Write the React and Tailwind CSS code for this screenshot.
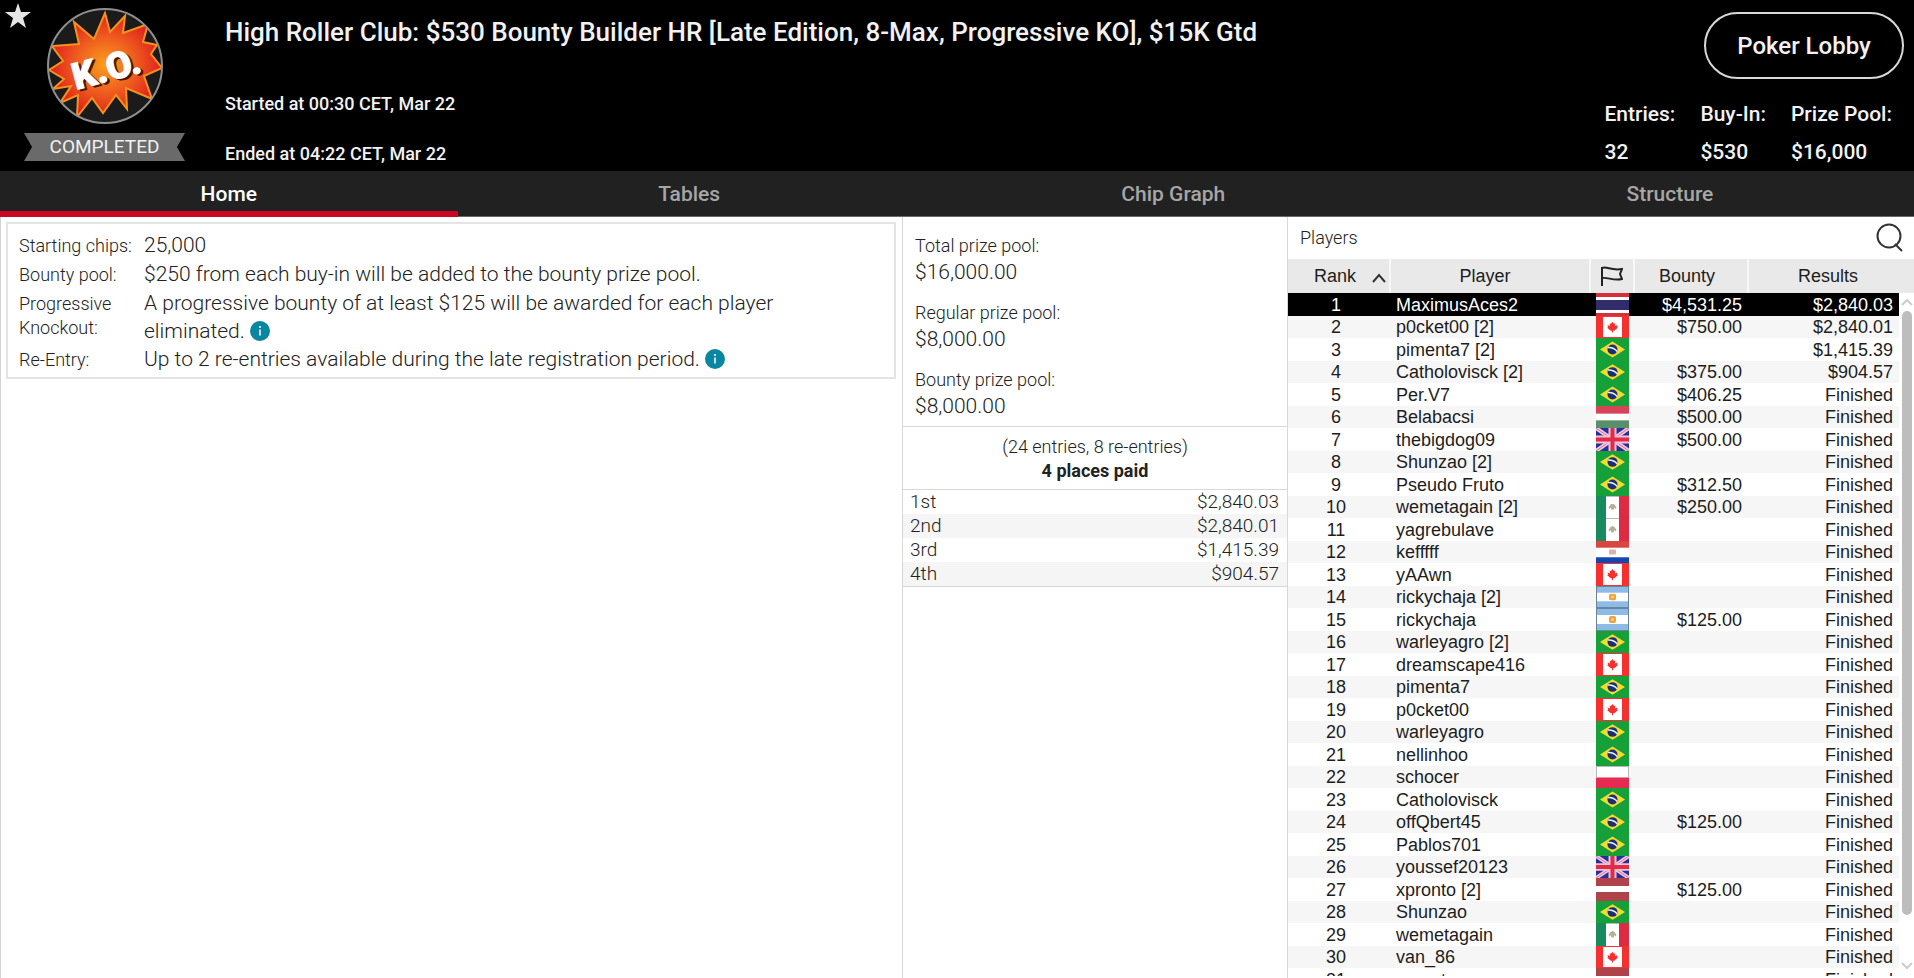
import React from "react";

const header = [
    { label: "Entries:", value: "32" },
    { label: "Buy-In:", value: "$530" },
    { label: "Prize Pool:", value: "$16,000" },
];

const tabs = ["Home", "Tables", "Chip Graph", "Structure"];

const pools = [
    { label: "Total prize pool:", value: "$16,000.00" },
    { label: "Regular prize pool:", value: "$8,000.00" },
    { label: "Bounty prize pool:", value: "$8,000.00" },
];

const payouts = [
    { place: "1st", prize: "$2,840.03" },
    { place: "2nd", prize: "$2,840.01" },
    { place: "3rd", prize: "$1,415.39" },
    { place: "4th", prize: "$904.57" },
];

const players = [
    { name: "MaximusAces2", flag: "th", bounty: "$4,531.25", result: "$2,840.03" },
    { name: "p0cket00 [2]", flag: "ca", bounty: "$750.00", result: "$2,840.01" },
    { name: "pimenta7 [2]", flag: "br", result: "$1,415.39" },
    { name: "Catholovisck [2]", flag: "br", bounty: "$375.00", result: "$904.57" },
    { name: "Per.V7", flag: "br", bounty: "$406.25" },
    { name: "Belabacsi", flag: "hu", bounty: "$500.00" },
    { name: "thebigdog09", flag: "gb", bounty: "$500.00" },
    { name: "Shunzao [2]", flag: "br" },
    { name: "Pseudo Fruto", flag: "br", bounty: "$312.50" },
    { name: "wemetagain [2]", flag: "mx", bounty: "$250.00" },
    { name: "yagrebulave", flag: "mx" },
    { name: "kefffff", flag: "py" },
    { name: "yAAwn", flag: "ca" },
    { name: "rickychaja [2]", flag: "ar" },
    { name: "rickychaja", flag: "ar", bounty: "$125.00" },
    { name: "warleyagro [2]", flag: "br" },
    { name: "dreamscape416", flag: "ca" },
    { name: "pimenta7", flag: "br" },
    { name: "p0cket00", flag: "ca" },
    { name: "warleyagro", flag: "br" },
    { name: "nellinhoo", flag: "br" },
    { name: "schocer", flag: "pl" },
    { name: "Catholovisck", flag: "br" },
    { name: "offQbert45", flag: "br", bounty: "$125.00" },
    { name: "Pablos701", flag: "br" },
    { name: "youssef20123", flag: "gb" },
    { name: "xpronto [2]", flag: "lv", bounty: "$125.00" },
    { name: "Shunzao", flag: "br" },
    { name: "wemetagain", flag: "mx" },
    { name: "van_86", flag: "ca" },
    { name: "xpronto", flag: "lv" },
];

const flags = {
    th: (
        <>
            <rect width="33" height="23" fill="#d6303c" />
            <rect y="4" width="33" height="16" fill="#fff" />
            <rect y="7" width="33" height="10" fill="#312c6b" />
        </>
    ),
    ca: (
        <>
            <rect width="33" height="23" fill="#f5302f" />
            <rect x="7" y="1" width="19" height="21" fill="#fff" />
            <path d="M16.500 6l1.500 2 1.200-.5-.2 3 2.500-1-.6 2 .9.800-3.600 3h-1.200v2h-1v-2h-1.200l-3.600-3 .9-.8-.6-2 2.500 1-.2-3 1.200.5z" fill="#f5302f" />
        </>
    ),
    br: (
        <>
            <rect width="33" height="23" fill="#15a03a" />
            <path d="M4 11.500L16.500 3.500 29 11.500 16.500 19.500z" fill="#f2dc2c" />
            <circle cx="16.500" cy="11.500" r="5" fill="#1d2f73" />
            <path d="M12 9.500c3.500-.2 7 1.200 9.200 4" stroke="#e8f0f4" strokeWidth="1.500" fill="none" />
        </>
    ),
    hu: (
        <>
            <rect width="33" height="23" fill="#fff" />
            <rect width="33" height="8" fill="#d64458" />
            <rect y="15" width="33" height="8" fill="#5a8f6c" />
        </>
    ),
    gb: (
        <>
            <rect width="33" height="23" fill="#26309a" />
            <path d="M0 0L33 23M33 0L0 23" stroke="#f1c9e4" strokeWidth="4" />
            <path d="M0 0L33 23M33 0L0 23" stroke="#e0708e" strokeWidth="1" />
            <path d="M16.500 0v23M0 11.500h33" stroke="#f3c3d3" strokeWidth="8" />
            <path d="M16.500 0v23M0 11.500h33" stroke="#e12b48" strokeWidth="4" />
        </>
    ),
    mx: (
        <>
            <rect width="33" height="23" fill="#fff" />
            <rect width="10" height="23" fill="#198a5e" />
            <rect x="23" width="10" height="23" fill="#df2a43" />
            <path d="M12.500 12l2-3 2-1 2 1 2 3-1 1.500-1-1.500-1 2.500h-2l-1-2.500-1 1.500z" fill="#b9ae95" />
            <path d="M10 .5h13" stroke="#b9b9b9" />
        </>
    ),
    py: (
        <>
            <rect width="33" height="23" fill="#fff" />
            <rect width="33" height="7" fill="#d94541" />
            <rect y="17" width="33" height="6" fill="#1348b0" />
            <rect x="13" y="9" width="7" height="5" rx="1" fill="#d8b3ae" />
        </>
    ),
    ar: (
        <>
            <rect width="33" height="23" fill="#fff" />
            <rect width="33" height="7" fill="#8dbbe6" />
            <rect y="16" width="33" height="7" fill="#8dbbe6" />
            <rect x="13" y="8" width="7" height="7" rx="2" fill="#eda33b" />
            <circle cx="16.500" cy="11.500" r="1.500" fill="#f6cf82" />
            <rect x=".5" y=".5" width="32" height="22" fill="none" stroke="#67839d" />
        </>
    ),
    pl: (
        <>
            <rect width="33" height="23" fill="#fff" />
            <rect y="12" width="33" height="11" fill="#e52c50" />
            <path d="M0 .5h33M.5 0v12M32.500 0v12" stroke="#b5b5b5" />
        </>
    ),
    lv: (
        <>
            <rect width="33" height="23" fill="#b0424c" />
            <rect y="8" width="33" height="6" fill="#fff" />
        </>
    ),
};

function Flag({ code }) {
    return (
        <svg
            viewBox="0 0 33 23"
            preserveAspectRatio="none"
            className="mx-auto block h-[23px] w-[33px] group-even:h-[22px]"
            aria-hidden="true">
            {flags[code]}
        </svg>
    );
}

function KoLogo() {
    return (
        <svg viewBox="0 0 116 116" className="size-[116px]" role="img" aria-label="K.O.">
            <defs>
                <radialGradient id="blast">
                    <stop offset="0" stopColor="#f9a01b" />
                    <stop offset=".5" stopColor="#f0611f" />
                    <stop offset="1" stopColor="#e0201c" />
                </radialGradient>
                <clipPath id="disc">
                    <circle cx="58" cy="58" r="57" />
                </clipPath>
            </defs>
            <circle cx="58" cy="58" r="57" fill="#1b1b1b" />
            <path
                clipPath="url(#disc)"
                d="M58 5L63 24 78 8 76 25 101 16 96 34 110 37 104 46 115 60 97 68 105 91 79 80 80 101 69 87 56 105 45 90 30 109 31 87 13 95 24 78 6 81 17 71 2 62 16 53 5 38 32 36 27 14 47 31z"
                fill="url(#blast)"
                stroke="#f5921e"
                strokeWidth="2"
            />
            <g fontFamily="Roboto, sans-serif" fontWeight="900" fontSize="37" transform="translate(29 82) rotate(-15)">
                <text x="2" y="2" fill="#4c1408" stroke="#4c1408">K.O.</text>
                <text fill="#fff" stroke="#fff">K.O.</text>
            </g>
            <circle cx="58" cy="58" r="57" fill="none" stroke="#8f8f8f" strokeWidth="2" />
        </svg>
    );
}

function InfoButton() {
    return (
        <button type="button" aria-label="More info" className="inline-block size-5 align-[-3px]">
            <svg viewBox="0 0 20 20" className="block size-5">
                <circle cx="10" cy="10" r="10" fill="#0a86a0" />
                <path d="M10 8.500v6M10 5v2" stroke="#fff" strokeWidth="1.500" />
            </svg>
        </button>
    );
}

function TopBar() {
    return (
        <header className="flex h-[171px] bg-black text-[#f2f2f2]">
            <div className="flex w-[225px] shrink-0">
                <button type="button" aria-label="Favorite" className="mt-[2px] ml-1 size-7 shrink-0">
                    <svg viewBox="0 0 28 28" className="size-7">
                        <path d="M14 1l3 9h10l-8 6 3 10-8-6-8 6 3-10-8-6h10z" fill="#e6e6e6" />
                    </svg>
                </button>
                <div className="-ml-2 flex w-[161px] flex-col items-center pt-2">
                    <KoLogo />
                    <div className="mt-[9px] flex h-7 w-full items-center justify-center bg-[#6a6a6a] text-[19px] text-[#f0f0f0] [clip-path:polygon(0_0,100%_0,95%_50%,100%_100%,0_100%,5%_50%)]">
                        COMPLETED
                    </div>
                </div>
            </div>
            <div className="flex flex-1 flex-col font-medium">
                <h1 className="mt-4 text-[26px] leading-8">
                    High Roller Club: $530 Bounty Builder HR [Late Edition, 8-Max, Progressive KO], $15K Gtd
                </h1>
                <p className="mt-10 text-lg leading-8">Started at 00:30 CET, Mar 22</p>
                <p className="mt-[18px] text-lg leading-8">Ended at 04:22 CET, Mar 22</p>
            </div>
            <div className="flex flex-col pr-[10px] font-medium">
                <button type="button" className="mt-3 h-[67px] w-[200px] self-end rounded-full border-2 border-[#d8d8d8] text-2xl">
                    Poker Lobby
                </button>
                <dl className="mt-4 mr-3 flex gap-[25px] text-[21px]">
                    {header.map(item => (
                        <div key={item.label} className="leading-[38px]">
                            <dt>{item.label}</dt>
                            <dd>{item.value}</dd>
                        </div>
                    ))}
                </dl>
            </div>
        </header>
    );
}

function Tabs() {
    return (
        <nav className="flex h-[46px] border-b border-[#6b6768] bg-[#212121] text-[21px] font-medium">
            {tabs.map((tab, i) => (
                <button
                    key={tab}
                    type="button"
                    className={
                        i === 0
                            ? "-mb-px flex-auto border-b-[6px] border-[#cc0522] pt-2 text-white"
                            : "flex-auto pt-[2px] text-[#a6a6a6]"
                    }>
                    {tab}
                </button>
            ))}
        </nav>
    );
}

function Details() {
    return (
        <section className="min-w-0 flex-1 border-l border-[#d4d4d4] pt-[5px] pr-[6px] pl-[5px]">
            <dl className="grid grid-cols-[125px_1fr] border-2 border-[#e4e4e4] px-[11px] pt-[7px] pb-[3px] text-[21px] leading-7 font-light">
                <dt className="pt-px text-lg leading-7">Starting chips:</dt>
                <dd>25,000</dd>
                <dt className="pt-px text-lg leading-7">Bounty pool:</dt>
                <dd>$250 from each buy-in will be added to the bounty prize pool.</dd>
                <dt className="pt-[3px] text-lg leading-6">Progressive Knockout:</dt>
                <dd className="max-w-[680px]">
                    A progressive bounty of at least $125 will be awarded for each player eliminated. <InfoButton />
                </dd>
                <dt className="pt-px text-lg leading-7">Re-Entry:</dt>
                <dd>
                    Up to 2 re-entries available during the late registration period. <InfoButton />
                </dd>
            </dl>
        </section>
    );
}

function Prizes() {
    return (
        <section className="w-[385px] shrink-0 border-l border-[#d8d8d8] font-light">
            <dl className="flex flex-col gap-[13px] border-b border-[#d8d8d8] px-3 pt-[15px] pb-[6px]">
                {pools.map(pool => (
                    <div key={pool.label}>
                        <dt className="text-lg leading-[27px]">{pool.label}</dt>
                        <dd className="text-[21px] leading-[27px]">{pool.value}</dd>
                    </div>
                ))}
            </dl>
            <div className="border-b border-[#d8d8d8] pt-2 pb-[6px] text-center text-lg leading-6">
                <p>(24 entries, 8 re-entries)</p>
                <p className="font-bold">4 places paid</p>
            </div>
            <table className="w-full border-b border-[#d8d8d8] text-[19px] leading-6">
                <tbody>
                    {payouts.map(row => (
                        <tr key={row.place} className="even:bg-[#f5f5f5]">
                            <td className="pl-[7px]">{row.place}</td>
                            <td className="pr-2 text-right">{row.prize}</td>
                        </tr>
                    ))}
                </tbody>
            </table>
        </section>
    );
}

function Players() {
    return (
        <section className="flex w-[627px] shrink-0 flex-col border-l border-[#d8d8d8]">
            <div className="flex h-[42px] shrink-0 items-center justify-between pr-[9px] pl-3">
                <h2 className="text-lg font-light">Players</h2>
                <button type="button" aria-label="Search players">
                    <svg viewBox="0 0 32 32" className="size-8" fill="none" stroke="#333" strokeWidth="2">
                        <circle cx="16" cy="14" r="11.500" />
                        <path d="M22 22l7 7" />
                    </svg>
                </button>
            </div>
            <div className="flex min-h-0 flex-1 pb-[2px] font-['Liberation_Sans',Arial,sans-serif] text-lg text-[#1d1d1d]">
                <div className="flex-1 overflow-hidden">
                    <table className="w-full table-fixed">
                        <colgroup>
                            <col className="w-[102px]" />
                            <col className="w-[200px]" />
                            <col className="w-[44px]" />
                            <col className="w-[114px]" />
                            <col />
                        </colgroup>
                        <thead>
                            <tr className="h-[34px] bg-[#e9e9e9] *:font-normal">
                                <th className="border-r-2 border-[#f7f7f7]">
                                    <span className="flex items-center justify-end gap-4 pr-[3px]">
                                        Rank
                                        <svg viewBox="0 0 14 10" className="mt-1 h-[10px] w-[14px]" fill="none" stroke="#333" strokeWidth="2">
                                            <path d="M1 9l6-7 6 7" />
                                        </svg>
                                    </span>
                                </th>
                                <th className="border-r-2 border-[#f7f7f7] pr-[10px]">Player</th>
                                <th className="border-r-2 border-[#f7f7f7]" aria-label="Country">
                                    <svg viewBox="0 0 22 20" className="mx-auto h-5 w-[22px]" fill="none" stroke="#222" strokeWidth="2">
                                        <path d="M1 1v19M1 2c5-2 9 3 20 1l-2 5 2 5c-9 2-14-2-20-1" />
                                    </svg>
                                </th>
                                <th className="border-r-2 border-[#f7f7f7] pr-2">Bounty</th>
                                <th className="pl-2">Results</th>
                            </tr>
                        </thead>
                        <tbody className="leading-5">
                            {players.map((player, i) => (
                                <tr
                                    key={i}
                                    className="group h-[23px] first:bg-black first:text-white even:h-[22px] even:bg-[#f6f6f6]">
                                    <td className="pr-[6px] text-center">{i + 1}</td>
                                    <td className="pl-[6px]">{player.name}</td>
                                    <td className="align-top">
                                        <Flag code={player.flag} />
                                    </td>
                                    <td className="pr-[6px] text-right">{player.bounty}</td>
                                    <td className="pr-[6px] text-right">{player.result || "Finished"}</td>
                                </tr>
                            ))}
                        </tbody>
                    </table>
                </div>
                <div className="flex w-[15px] flex-col items-center">
                    <div className="h-[34px] w-full shrink-0 bg-[#e9e9e9]" />
                    <svg viewBox="0 0 12 8" className="my-[5px] h-2 w-3 shrink-0" fill="none" stroke="#ccc" strokeWidth="2">
                        <path d="M1 7l5-5 5 5" />
                    </svg>
                    <div className="h-[604px] w-[10px] rounded-full bg-[#bdbdbd]" />
                    <svg viewBox="0 0 12 8" className="mt-auto mb-[6px] h-2 w-3 shrink-0" fill="none" stroke="#ccc" strokeWidth="2">
                        <path d="M1 1l5 5 5-5" />
                    </svg>
                </div>
            </div>
        </section>
    );
}

function App() {
    return (
        <div className="flex h-screen flex-col overflow-hidden bg-white font-[Roboto,sans-serif] text-[#222]">
            <TopBar />
            <Tabs />
            <main className="flex min-h-0 flex-1">
                <Details />
                <Prizes />
                <Players />
            </main>
        </div>
    );
}

export default App;
